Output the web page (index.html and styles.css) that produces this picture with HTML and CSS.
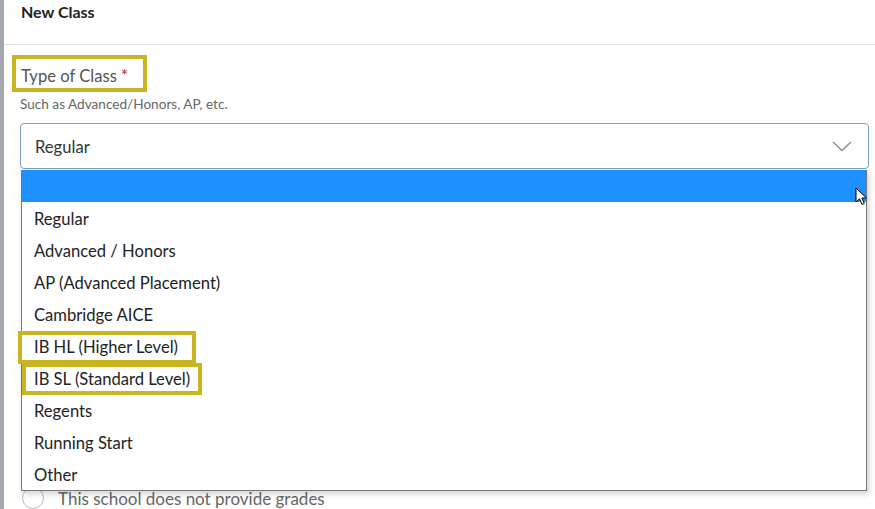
FILE: index.html
```html
<!DOCTYPE html>
<html lang="en">
<head>
<meta charset="utf-8">
<title>New Class</title>
<link rel="stylesheet" href="styles.css">
</head>
<body>
<div class="page">
  <div class="backdrop"></div>
  <div class="modal">
    <div class="modal-header">New Class</div>
    <div class="modal-body">
      <div class="field">
        <div class="annot label-annot">
          <label class="label">Type of Class <span class="req">*</span></label>
        </div>
        <div class="help">Such as Advanced/Honors, AP, etc.</div>
        <div class="select-wrap">
          <div class="select">
            <span class="select-value">Regular</span>
            <svg class="chevron" width="20" height="11" viewBox="0 0 20 11"><polyline points="1,1 10,9.5 19,1" fill="none" stroke="#8a8a8a" stroke-width="1.3"/></svg>
          </div>
          <ul class="options">
            <li class="option selected"></li>
            <li class="option">Regular</li>
            <li class="option">Advanced / Honors</li>
            <li class="option">AP (Advanced Placement)</li>
            <li class="option">Cambridge AICE</li>
            <li class="option hl hl-a">IB HL (Higher Level)</li>
            <li class="option hl hl-b">IB SL (Standard Level)</li>
            <li class="option">Regents</li>
            <li class="option">Running Start</li>
            <li class="option">Other</li>
          </ul>
          <svg class="cursor" width="14" height="20" viewBox="0 0 14 20"><path d="M1 1 L1 15 L4.5 11.8 L7 17.5 L9.3 16.5 L6.9 11 L11.5 11 Z" fill="#fff" stroke="#000" stroke-width="1" stroke-linejoin="round"/></svg>
        </div>
      </div>
      <div class="hidden-fields"></div>
      <div class="radio-row">
        <span class="radio"></span>
        <span class="radio-label">This school does not provide grades</span>
      </div>
    </div>
  </div>
</div>
</body>
</html>
```
FILE: styles.css
```css
*, *::before, *::after { box-sizing: border-box; }
html, body { margin: 0; padding: 0; }
body {
  width: 875px;
  height: 509px;
  overflow: hidden;
  background: #fff;
  font-family: "Lato", "Open Sans", sans-serif;
  color: #222;
}
.page {
  display: flex;
  height: 509px;
}
.backdrop {
  width: 4px;
  flex: none;
  background: #a3a8ad;
}
.modal {
  flex: 1;
  background: #fff;
}
.modal-header {
  height: 45px;
  padding-left: 17px;
  line-height: 24px;
  font-size: 16px;
  font-weight: 700;
  color: #222;
  border-bottom: 1px solid #e2e2e2;
}
.modal-body {
  padding: 10px 6px 0 16px;
}
.annot {
  border: 4px solid #c9b51f;
}
.label-annot {
  display: inline-block;
  margin-left: -8px;
  padding: 5px 5px 0 5px;
  height: 37px;
  width: 135px;
}
.label {
  display: block;
  font-size: 16.6px;
  line-height: 24px;
  color: #555;
}
.req { color: #b21f24; }
.help {
  margin-top: 3px;
  font-size: 13.6px;
  line-height: 18px;
  color: #666;
}
.select-wrap {
  position: relative;
  margin-top: 10px;
}
.select {
  height: 46px;
  border: 1px solid #7f9fc0;
  border-radius: 4px;
  display: flex;
  align-items: center;
  justify-content: space-between;
  padding: 2px 16px 0 14px;
  font-size: 16.6px;
  color: #333;
}
.chevron { display: block; margin-top: -2px; }
.options {
  position: absolute;
  top: 47px;
  left: 1px;
  right: 2px;
  margin: 0;
  padding: 0;
  list-style: none;
  background: #fff;
  border: 1px solid #767676;
  border-top: none;
  box-shadow: 2px 3px 6px rgba(0,0,0,0.18);
  z-index: 2;
}
.option {
  position: relative;
  height: 32px;
  padding-top: 1px;
  line-height: 32px;
  padding-left: 12px;
  font-size: 16.6px;
  color: #222;
}
.option.selected {
  background: #1e90ff;
}
.hl::after {
  content: "";
  position: absolute;
  border: 4px solid #c9b51f;
  pointer-events: none;
}
.hl-a::after {
  left: -4px;
  top: 1px;
  width: 178px;
  height: 33px;
}
.hl-b::after {
  left: 0;
  top: 1px;
  width: 180px;
  height: 32px;
}
.cursor {
  position: absolute;
  right: 0;
  top: 64px;
  z-index: 3;
}
.hidden-fields {
  height: 318px;
}
.radio-row {
  display: flex;
  align-items: center;
  gap: 14px;
  margin-left: 2px;
}
.radio {
  width: 22px;
  height: 22px;
  border: 1.5px solid #bbb;
  border-radius: 50%;
  flex: none;
}
.radio-label {
  font-size: 17px;
  color: #666;
}
```
